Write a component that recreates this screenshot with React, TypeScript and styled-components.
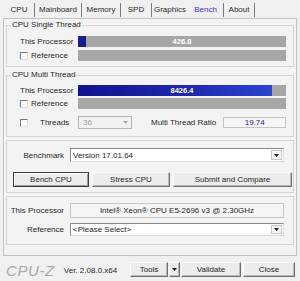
import React from 'react';
import styled, { createGlobalStyle, css } from 'styled-components';

const GlobalStyle = createGlobalStyle`
  html, body {
    margin: 0;
    padding: 0;
    background: #f0f0f0;
  }
  body {
    font-family: "Liberation Sans", Arial, sans-serif;
    font-size: 8px;
    color: #262626;
  }
`;

const Window = styled.div`
  width: 300px;
  height: 281px;
  display: flex;
  flex-direction: column;
  overflow: hidden;
  background: #f0f0f0;
`;

const TabStrip = styled.div`
  display: flex;
  height: 18px;
  padding-left: 4px;
  box-sizing: border-box;
`;

const Tab = styled.div<{ $w: number; $active?: boolean; $edge?: boolean }>`
  width: ${(p) => p.$w}px;
  height: 14px;
  margin-top: 3px;
  line-height: 14px;
  text-align: center;
  box-sizing: border-box;
  border-right: ${(p) => (p.$edge ? '1px solid #7c7c7c' : 'none')};
  color: ${(p) => (p.$active ? '#3434c4' : '#2a2a2a')};
`;

const Panel = styled.div`
  margin: 0 3px;
  height: 238px;
  box-sizing: border-box;
  border: 1px solid #c2c2c2;
  background: #f3f3f3;
  padding: 1px 2px 0;
  display: flex;
  flex-direction: column;
  gap: 3px;
`;

const Group = styled.fieldset<{ $pt: number; $pb: number; $gap: number }>`
  margin: 0;
  min-width: 0;
  border: 1px solid #d4d4d4;
  padding: ${(p) => `${p.$pt}px 1px ${p.$pb}px 0`};
  display: flex;
  flex-direction: column;
  gap: ${(p) => p.$gap}px;
`;

const Legend = styled.legend`
  margin-left: 4px;
  padding: 0 1px;
  line-height: 10px;
  height: 10px;
`;

const PlainGroup = styled.div<{ $pt: number; $pb: number; $gap: number }>`
  border: 1px solid #d4d4d4;
  padding: ${(p) => `${p.$pt}px 1px ${p.$pb}px 0`};
  display: flex;
  flex-direction: column;
  gap: ${(p) => p.$gap}px;
`;

const Row = styled.div<{ $h: number; $mt?: number }>`
  display: flex;
  align-items: center;
  height: ${(p) => p.$h}px;
  margin-top: ${(p) => p.$mt ?? 0}px;
`;

const LabelCell = styled.div<{ $gap?: number }>`
  width: 71px;
  box-sizing: border-box;
  padding-left: 13px;
  display: flex;
  align-items: center;
  gap: ${(p) => p.$gap ?? 0}px;
  white-space: nowrap;
`;

const Check = styled.span`
  width: 8px;
  height: 8px;
  box-sizing: border-box;
  background: #ffffff;
  border: 1px solid;
  border-color: #7a7a7a #e0e0e0 #e0e0e0 #7a7a7a;
`;

const Bar = styled.div`
  width: 208px;
  height: 11px;
  background: #a6a6a6;
  display: grid;
  grid-template: 1fr / 1fr;
`;

const Fill = styled.div<{ $multi?: boolean }>`
  grid-area: 1 / 1;
  height: 100%;
  background: ${(p) =>
    p.$multi ? 'linear-gradient(90deg, #12128e, #1f2ab0 60%, #2b44d2)' : '#1b1b92'};
`;

const BarText = styled.span`
  grid-area: 1 / 1;
  text-align: center;
  line-height: 11px;
  color: #ffffff;
  font-weight: bold;
  font-size: 7.5px;
`;

const ThreadsCombo = styled.div`
  width: 54px;
  height: 13px;
  box-sizing: border-box;
  border: 1px solid #b4b4b4;
  background: #f2f2f2;
  display: flex;
  align-items: center;
  padding-left: 4px;
  color: #a0a0a0;
`;

const ComboText = styled.span`
  flex: 1;
  white-space: nowrap;
`;

const ArrowBox = styled.span<{ $disabled?: boolean }>`
  width: 11px;
  height: 100%;
  box-sizing: border-box;
  display: flex;
  align-items: center;
  justify-content: center;
  background: ${(p) => (p.$disabled ? '#f2f2f2' : '#f4f4f4')};
  border: ${(p) => (p.$disabled ? 'none' : '1px solid #c8c8c8')};
`;

const RatioLabel = styled.span`
  margin-left: 19px;
  white-space: nowrap;
`;

const RatioBox = styled.div`
  margin-left: 7px;
  width: 63px;
  height: 11px;
  box-sizing: border-box;
  border: 1px solid #c4c4c4;
  background: #f6f6f6;
  color: #2323a4;
  text-align: center;
  line-height: 9px;
`;

const FieldLabel = styled.span`
  width: 57px;
  text-align: right;
  margin-right: 6px;
  white-space: nowrap;
`;

const Combo = styled.div<{ $h: number }>`
  width: 214px;
  height: ${(p) => p.$h}px;
  box-sizing: border-box;
  border: 1px solid;
  border-color: #8a8a8a #dcdcdc #dcdcdc #8a8a8a;
  background: #ffffff;
  display: flex;
  align-items: center;
  padding: 1px 1px 1px 2px;
  color: #1c1c1c;
`;

const InfoBox = styled.div`
  width: 214px;
  height: 15px;
  box-sizing: border-box;
  border: 1px solid #c6c6c6;
  background: #f5f5f5;
  text-align: center;
  line-height: 13px;
`;

const ButtonRow = styled.div`
  display: flex;
  gap: 3px;
  padding-left: 6px;
  height: 15px;
`;

const Button = styled.div<{ $w?: number; $default?: boolean }>`
  ${(p) => (p.$w ? css`width: ${p.$w}px;` : css`flex: 1;`)}
  height: 15px;
  box-sizing: border-box;
  display: flex;
  align-items: center;
  justify-content: center;
  background: #ececec;
  white-space: nowrap;
  border: 1px solid;
  border-color: #fbfbfb #6f6f6f #6f6f6f #fbfbfb;
  box-shadow: inset -1px -1px 0 #b9b9b9;
  ${(p) =>
    p.$default &&
    css`
      border-color: #3c3c3c;
      box-shadow: inset 1px 1px 0 #ffffff, inset -1px -1px 0 #9a9a9a;
    `}
`;

const Footer = styled.div`
  flex: 1;
  display: flex;
  align-items: center;
  padding: 0 5px 0 6px;
`;

const Logo = styled.span`
  font-size: 15px;
  font-style: italic;
  letter-spacing: 0.6px;
  color: #a9a9a9;
  line-height: 15px;
  margin-top: 3px;
`;

const Version = styled.span`
  margin-left: 9px;
  margin-top: 3px;
  white-space: nowrap;
`;

const FooterButtons = styled.div`
  margin-left: auto;
  display: flex;
  margin-top: 1px;
`;

const SplitPart = styled.div`
  display: flex;
  gap: 1px;
  margin-right: 1px;
`;

const FooterSide = styled.div`
  display: flex;
  gap: 2px;
`;

function DownArrow({ color = '#1a1a1a' }: { color?: string }) {
  return (
    <svg width="5" height="3" viewBox="0 0 5 3">
      <path d="M0 0h5L2.5 3z" fill={color} />
    </svg>
  );
}

const tabs = [
  { name: 'CPU', w: 31 },
  { name: 'Mainboard', w: 47 },
  { name: 'Memory', w: 39 },
  { name: 'SPD', w: 31 },
  { name: 'Graphics', w: 36, noEdge: true },
  { name: 'Bench', w: 36, active: true },
  { name: 'About', w: 31 },
];

const single = { value: 426.8, ratio: 0.038 };
const multi = { value: 8426.4, ratio: 0.933 };

export default function App() {
  return (
    <Window>
      <GlobalStyle />
      <TabStrip>
        {tabs.map((t) => (
          <Tab key={t.name} $w={t.w} $active={t.active} $edge={!t.noEdge}>
            {t.name}
          </Tab>
        ))}
      </TabStrip>

      <Panel>
        <Group $pt={6} $pb={5} $gap={3}>
          <Legend>CPU Single Thread</Legend>
          <Row $h={11}>
            <LabelCell>This Processor</LabelCell>
            <Bar>
              <Fill style={{ width: `${single.ratio * 100}%` }} />
              <BarText>{single.value.toFixed(1)}</BarText>
            </Bar>
          </Row>
          <Row $h={11}>
            <LabelCell $gap={3}>
              <Check />
              Reference
            </LabelCell>
            <Bar />
          </Row>
        </Group>

        <Group $pt={5} $pb={7} $gap={2}>
          <Legend>CPU Multi Thread</Legend>
          <Row $h={11}>
            <LabelCell>This Processor</LabelCell>
            <Bar>
              <Fill $multi style={{ width: `${multi.ratio * 100}%` }} />
              <BarText>{multi.value.toFixed(1)}</BarText>
            </Bar>
          </Row>
          <Row $h={11}>
            <LabelCell $gap={3}>
              <Check />
              Reference
            </LabelCell>
            <Bar />
          </Row>
          <Row $h={13} $mt={5}>
            <LabelCell $gap={12}>
              <Check />
              Threads
            </LabelCell>
            <ThreadsCombo>
              <ComboText>36</ComboText>
              <ArrowBox $disabled>
                <DownArrow color="#a8a8a8" />
              </ArrowBox>
            </ThreadsCombo>
            <RatioLabel>Multi Thread Ratio</RatioLabel>
            <RatioBox>19.74</RatioBox>
          </Row>
        </Group>

        <PlainGroup $pt={7} $pb={5} $gap={10}>
          <Row $h={14}>
            <FieldLabel>Benchmark</FieldLabel>
            <Combo $h={14}>
              <ComboText>Version 17.01.64</ComboText>
              <ArrowBox>
                <DownArrow />
              </ArrowBox>
            </Combo>
          </Row>
          <ButtonRow>
            <Button $w={76} $default>
              Bench CPU
            </Button>
            <Button $w={78}>Stress CPU</Button>
            <Button>Submit and Compare</Button>
          </ButtonRow>
        </PlainGroup>

        <PlainGroup $pt={6} $pb={8} $gap={5}>
          <Row $h={15}>
            <FieldLabel>This Processor</FieldLabel>
            <InfoBox>Intel® Xeon® CPU E5-2696 v3 @ 2.30GHz</InfoBox>
          </Row>
          <Row $h={13}>
            <FieldLabel>Reference</FieldLabel>
            <Combo $h={13}>
              <ComboText>&lt;Please Select&gt;</ComboText>
              <ArrowBox>
                <DownArrow />
              </ArrowBox>
            </Combo>
          </Row>
        </PlainGroup>
      </Panel>

      <Footer>
        <Logo>CPU-Z</Logo>
        <Version>Ver. 2.08.0.x64</Version>
        <FooterButtons>
          <SplitPart>
            <Button $w={38}>Tools</Button>
            <Button $w={11}>
              <DownArrow />
            </Button>
          </SplitPart>
          <FooterSide>
            <Button $w={60}>Validate</Button>
            <Button $w={52}>Close</Button>
          </FooterSide>
        </FooterButtons>
      </Footer>
    </Window>
  );
}
